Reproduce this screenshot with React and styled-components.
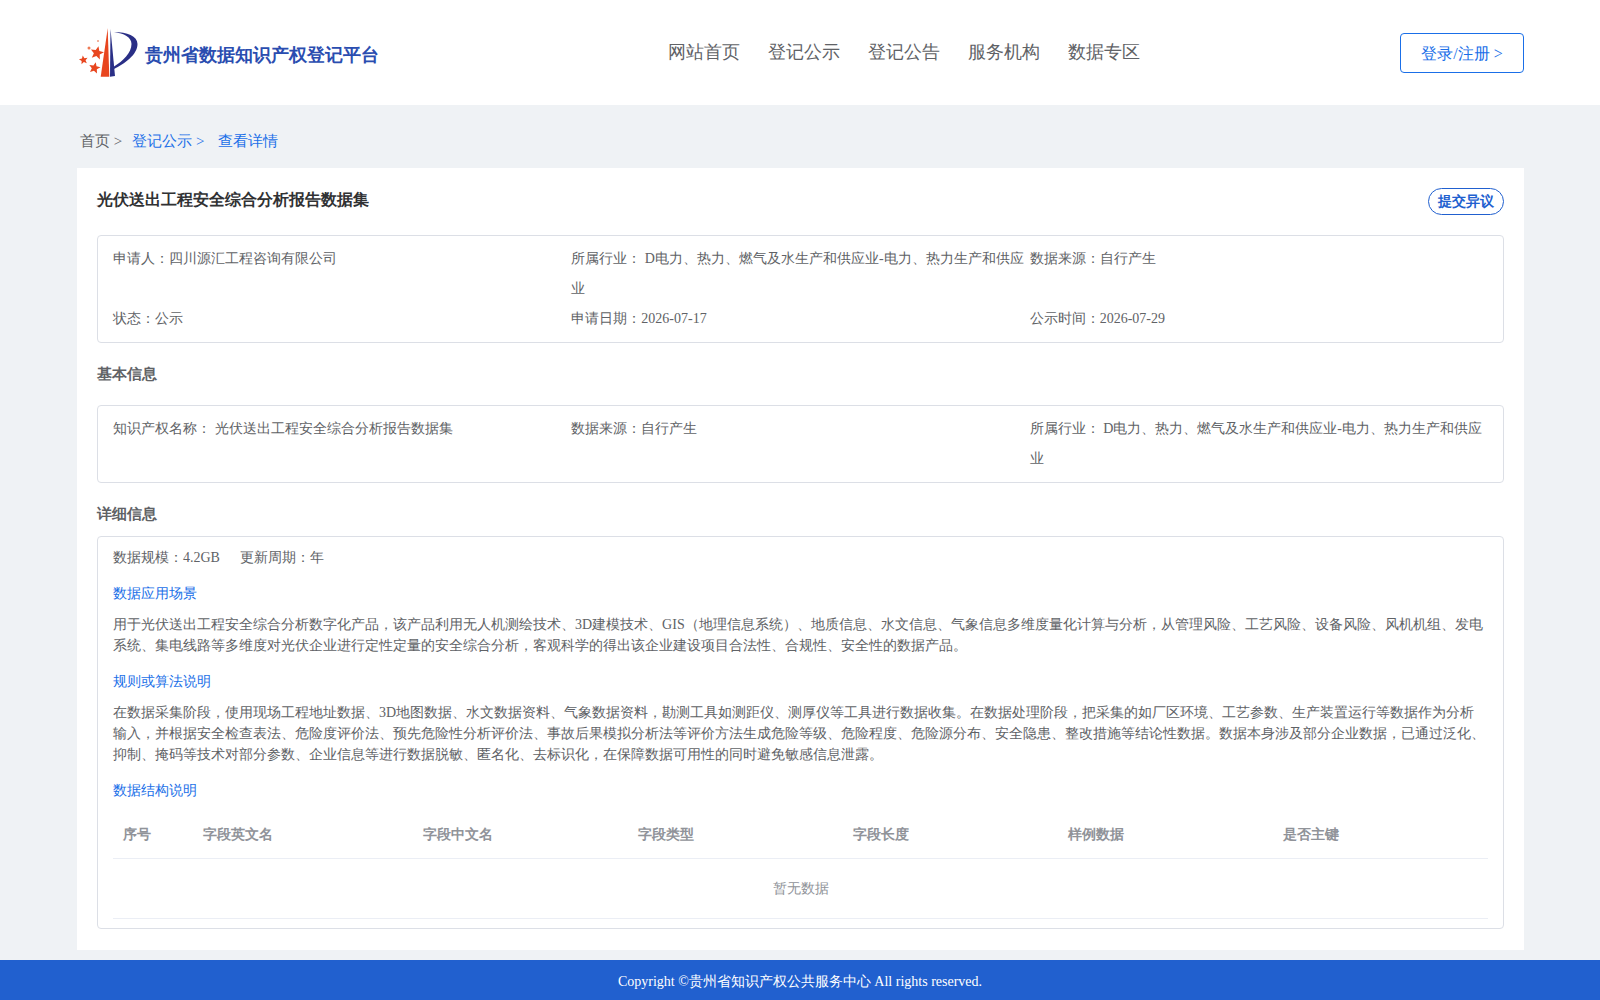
import React from "react";
import styled, { createGlobalStyle } from "styled-components";

const Global = createGlobalStyle`
  html, body { margin: 0; padding: 0; background: #eff2f5; }
  body { font-family: "Liberation Serif", serif; color: #606266; }
  * { box-sizing: border-box; }
`;
const Page = styled.div`
  height: 1000px;
  display: flex;
  flex-direction: column;
`;
const Header = styled.header`
  height: 105px;
  background: #fff;
  padding: 0 76px 0 77px;
  display: grid;
  grid-template-columns: 591px auto 1fr;
  align-items: center;
`;
const Brand = styled.div`
  display: flex;
  align-items: center;
  gap: 4px;
`;
const BrandName = styled.span`
  font-size: 18px;
  font-weight: 700;
  color: #2a4db0;
  position: relative;
  top: 2px;
`;
const Nav = styled.nav`
  display: flex;
  gap: 28px;
  position: relative;
  top: -1px;
`;
const NavLink = styled.a`
  font-size: 18px;
  color: #606266;
`;
const LoginCell = styled.div`
  display: flex;
  justify-content: flex-end;
`;
const Login = styled.button`
  width: 124px;
  height: 40px;
  padding: 4px 0 0;
  background: #fff;
  border: 1px solid #1a6fe8;
  border-radius: 4px;
  color: #1a6fe8;
  font: inherit;
  font-size: 16px;
`;
const Main = styled.main`
  flex: 1;
  padding: 0 76px 0 77px;
`;
const Crumbs = styled.div`
  height: 63px;
  display: flex;
  align-items: center;
  padding: 10px 0 0 3px;
  font-size: 15px;
`;
const Crumb = styled.span`
  color: ${(p) => (p.$active ? "#1a6fe8" : "#606266")};
  margin-right: ${(p) => p.$gap}px;
`;
const Card = styled.section`
  background: #fff;
  height: 782px;
  padding: 20px;
`;
const TitleRow = styled.div`
  display: flex;
  justify-content: space-between;
  align-items: flex-start;
  height: 47px;
`;
const Title = styled.h1`
  margin: 0;
  font-size: 16px;
  line-height: 24px;
  font-weight: 700;
  color: #303133;
`;
const Objection = styled.button`
  height: 27px;
  width: 76px;
  padding: 0;
  background: #fff;
  border: 1px solid #2160cf;
  border-radius: 14px;
  color: #2160cf;
  font: inherit;
  font-size: 14px;
  font-weight: 700;
`;
const Box = styled.div`
  border: 1px solid #dcdfe6;
  border-radius: 4px;
  padding: ${(p) => p.$pad || "8px 15px"};
`;
const InfoGrid = styled.div`
  display: grid;
  grid-template-columns: repeat(3, 1fr);
  font-size: 14px;
  line-height: 30px;
`;
const SectionHead = styled.h2`
  margin: 0;
  font-size: 15px;
  font-weight: 700;
  color: #606266;
  line-height: 20px;
  padding: ${(p) => p.$pad};
`;
const Facts = styled.div`
  display: flex;
  gap: 20px;
  font-size: 14px;
  line-height: 20px;
`;
const SubHead = styled.div`
  font-size: 14px;
  line-height: 20px;
  color: #1a6fe8;
  margin-top: ${(p) => p.$top}px;
`;
const Para = styled.p`
  margin: 10px 0 0;
  font-size: 14px;
  line-height: 21px;
`;
const Table = styled.table`
  width: 100%;
  margin-top: 8px;
  border-collapse: collapse;
  table-layout: fixed;
  font-size: 14px;
`;
const Th = styled.th`
  height: 49px;
  padding: 4px 10px 0;
  text-align: left;
  font-weight: 700;
  color: #909399;
  border-bottom: 1px solid #ebeef5;
`;
const Empty = styled.td`
  height: 60px;
  padding: 2px 0 0;
  text-align: center;
  color: #909399;
  border-bottom: 1px solid #ebeef5;
`;
const Footer = styled.footer`
  height: 40px;
  padding-top: 4px;
  background: #2160cf;
  color: #fff;
  font-size: 14px;
  display: flex;
  align-items: center;
  justify-content: center;
`;

const Star = ({ x, y, r, a = 0 }) => {
  const pts = [];
  for (let i = 0; i < 10; i++) {
    const rad = i % 2 ? r * 0.45 : r;
    const t = ((-90 + a + i * 36) * Math.PI) / 180;
    pts.push(`${(x + rad * Math.cos(t)).toFixed(2)},${(y + rad * Math.sin(t)).toFixed(2)}`);
  }
  return <polygon points={pts.join(" ")} fill="#e8461f" />;
};
const Logo = () => (
  <svg width="64" height="52" viewBox="0 0 64 52" style={{ flex: "none" }}>
    <Star x={20} y={26} r={7} a={12} />
    <Star x={6.5} y={33} r={4.6} a={-10} />
    <Star x={17.5} y={41} r={6} a={12} />
    <circle cx={12} cy={21} r={1.5} fill="#ee7a55" />
    <circle cx={21} cy={14} r={1} fill="#ee9a7f" />
    <path d="M30.7 1.3 L23.7 49.7 L32.3 49.7 Z" fill="#e8461f" />
    <path d="M33.5 2 L33 49.7 L38 49 Z" fill="#2a2f86" />
    <path d="M37 5 C50 5 60.5 9 60.5 17 C60.5 28 47 37 37 42 L37 39.5 C46 34 54.5 26 54.5 17 C54.5 10 47 6.5 37 5 Z" fill="#2a2f86" />
  </svg>
);

const navItems = ["网站首页", "登记公示", "登记公告", "服务机构", "数据专区"];
const cols = [
  ["序号", 80], ["字段英文名", 220], ["字段中文名", 215], ["字段类型", 215],
  ["字段长度", 215], ["样例数据", 215], ["是否主键", 215],
];

export default function App() {
  return (
    <Page>
      <Global />
      <Header>
        <Brand>
          <Logo />
          <BrandName>贵州省数据知识产权登记平台</BrandName>
        </Brand>
        <Nav>{navItems.map((n) => <NavLink key={n}>{n}</NavLink>)}</Nav>
        <LoginCell><Login>登录/注册 &gt;</Login></LoginCell>
      </Header>
      <Main>
        <Crumbs>
          <Crumb $gap={10}>首页 &gt;</Crumb>
          <Crumb $active $gap={14}>登记公示 &gt;</Crumb>
          <Crumb $active>查看详情</Crumb>
        </Crumbs>
        <Card>
          <TitleRow>
            <Title>光伏送出工程安全综合分析报告数据集</Title>
            <Objection>提交异议</Objection>
          </TitleRow>
          <Box>
            <InfoGrid>
              <div>申请人：四川源汇工程咨询有限公司</div>
              <div>所属行业： D电力、热力、燃气及水生产和供应业-电力、热力生产和供应业</div>
              <div>数据来源：自行产生</div>
              <div>状态：公示</div>
              <div>申请日期：2026-07-17</div>
              <div>公示时间：2026-07-29</div>
            </InfoGrid>
          </Box>
          <SectionHead $pad="21px 0 21px">基本信息</SectionHead>
          <Box>
            <InfoGrid>
              <div>知识产权名称： 光伏送出工程安全综合分析报告数据集</div>
              <div>数据来源：自行产生</div>
              <div>所属行业： D电力、热力、燃气及水生产和供应业-电力、热力生产和供应业</div>
            </InfoGrid>
          </Box>
          <SectionHead $pad="21px 0 12px">详细信息</SectionHead>
          <Box $pad="11px 15px 9px">
            <Facts><span>数据规模：4.2GB</span><span>更新周期：年</span></Facts>
            <SubHead $top={16}>数据应用场景</SubHead>
            <Para>用于光伏送出工程安全综合分析数字化产品，该产品利用无人机测绘技术、3D建模技术、GIS（地理信息系统）、地质信息、水文信息、气象信息多维度量化计算与分析，从管理风险、工艺风险、设备风险、风机机组、发电系统、集电线路等多维度对光伏企业进行定性定量的安全综合分析，客观科学的得出该企业建设项目合法性、合规性、安全性的数据产品。</Para>
            <SubHead $top={16}>规则或算法说明</SubHead>
            <Para>在数据采集阶段，使用现场工程地址数据、3D地图数据、水文数据资料、气象数据资料，勘测工具如测距仪、测厚仪等工具进行数据收集。在数据处理阶段，把采集的如厂区环境、工艺参数、生产装置运行等数据作为分析输入，并根据安全检查表法、危险度评价法、预先危险性分析评价法、事故后果模拟分析法等评价方法生成危险等级、危险程度、危险源分布、安全隐患、整改措施等结论性数据。数据本身涉及部分企业数据，已通过泛化、抑制、掩码等技术对部分参数、企业信息等进行数据脱敏、匿名化、去标识化，在保障数据可用性的同时避免敏感信息泄露。</Para>
            <SubHead $top={16}>数据结构说明</SubHead>
            <Table>
              <colgroup>{cols.map(([n, w]) => <col key={n} width={w} />)}</colgroup>
              <thead><tr>{cols.map(([n]) => <Th key={n}>{n}</Th>)}</tr></thead>
              <tbody><tr><Empty colSpan={7}>暂无数据</Empty></tr></tbody>
            </Table>
          </Box>
        </Card>
      </Main>
      <Footer>Copyright ©贵州省知识产权公共服务中心 All rights reserved.</Footer>
    </Page>
  );
}
